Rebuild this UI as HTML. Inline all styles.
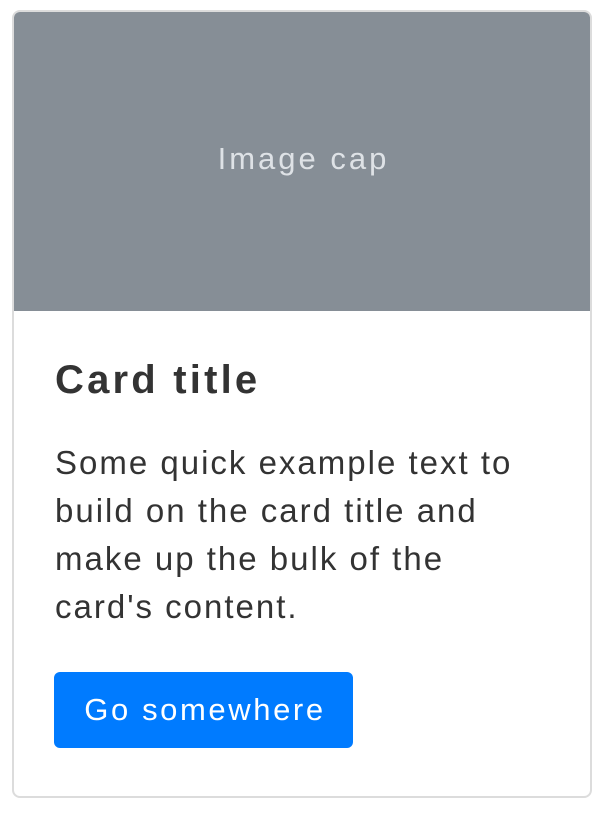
<!DOCTYPE html>
<html><head><style>
*{margin:0;padding:0;box-sizing:border-box}
body{width:610px;height:818px;background:#fff;font-family:"Liberation Sans",sans-serif;color:#333}
.card{position:absolute;left:12px;top:10px;width:580px;height:788px;border:2px solid #dcdcdc;border-radius:8px;overflow:hidden}
.cap{height:299px;background:#868e96;color:#dee2e6;font-size:31px;letter-spacing:3px;display:flex;align-items:center;justify-content:center;padding-bottom:5px;padding-left:3px}
.t{position:absolute;left:41px;top:346px;font-size:40px;font-weight:bold;letter-spacing:3.2px;color:#333;white-space:nowrap}
.p{position:absolute;left:41px;top:427px;font-size:33px;letter-spacing:2px;line-height:48px;width:560px;color:#333;white-space:nowrap}
.b{position:absolute;left:40px;top:660px;width:299px;height:76px;background:#007bff;border-radius:6px;color:#fff;font-size:31px;letter-spacing:2.6px;display:flex;align-items:center;justify-content:center;padding-left:3px}
</style></head><body>
<div class="card">
<div class="cap">Image cap</div>
<div class="t">Card title</div>
<div class="p">Some quick example text to<br>build on the card title and<br>make up the bulk of the<br>card's content.</div>
<div class="b">Go somewhere</div>
</div>
</body></html>
